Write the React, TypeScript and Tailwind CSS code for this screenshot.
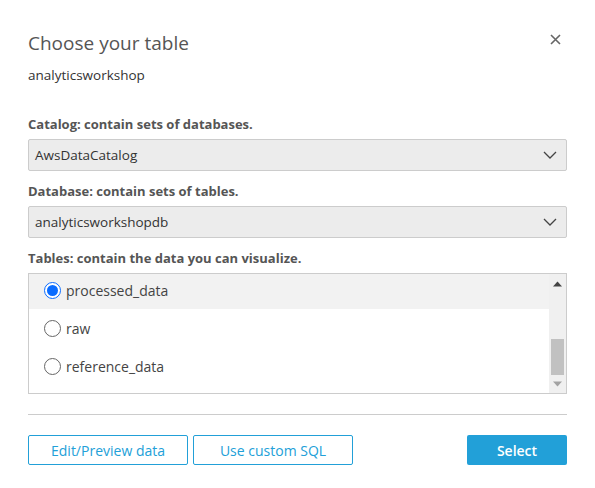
import React from "react";

const Chevron = () => (
  <svg width="14" height="8" viewBox="0 0 14 8" fill="none" stroke="#444" strokeWidth="1.3">
    <path d="M1 1l6 6 6-6" />
  </svg>
);

const Select = ({ value }: { value: string }) => (
  <div className="flex items-center justify-between h-[32px] bg-[#ececec] border border-[#cccccc] rounded-[2px] pl-[6px] pr-[9px] text-[13.5px] text-[#333]">
    <span>{value}</span>
    <Chevron />
  </div>
);

const Radio = ({ checked }: { checked?: boolean }) =>
  checked ? (
    <span className="w-[17px] h-[17px] rounded-full border-[1.5px] border-[#0a6cff] flex items-center justify-center bg-white">
      <span className="w-[11px] h-[11px] rounded-full bg-[#0a6cff]" />
    </span>
  ) : (
    <span className="w-[17px] h-[17px] rounded-full border border-[#666] bg-white" />
  );

export default function App() {
  const rows = [
    { name: "processed_data", checked: true },
    { name: "raw" },
    { name: "reference_data" },
  ];
  return (
    <div className="w-[595px] h-[488px] bg-white px-[28px] pt-[30px] font-['Open_Sans',sans-serif] relative">
      <div className="flex items-start justify-between">
        <h1 className="text-[19px] leading-[26px] text-[#555] font-normal">Choose your table</h1>
        <button className="mt-[4px] mr-[6px] text-[#666]">
          <svg width="11" height="11" viewBox="0 0 11 11" stroke="#666" strokeWidth="1.6">
            <path d="M1 1l9 9M10 1l-9 9" />
          </svg>
        </button>
      </div>
      <div className="mt-[10px] text-[13.5px] leading-[18px] text-[#333]">analyticsworkshop</div>

      <div className="mt-[31px] text-[13px] leading-[18px] font-bold text-[#555]">Catalog: contain sets of databases.</div>
      <div className="mt-[6px]"><Select value="AwsDataCatalog" /></div>

      <div className="mt-[11px] text-[13px] leading-[18px] font-bold text-[#555]">Database: contain sets of tables.</div>
      <div className="mt-[6px]"><Select value="analyticsworkshopdb" /></div>

      <div className="mt-[11px] text-[13px] leading-[18px] font-bold text-[#555]">Tables: contain the data you can visualize.</div>
      <div className="mt-[6px] h-[121px] border border-[#cccccc] flex">
        <div className="flex-1 flex flex-col">
          {rows.map((r) => (
            <div
              key={r.name}
              className={`flex items-center pl-[15px] gap-[5px] text-[14px] text-[#444] ${r.checked ? "bg-[#f2f2f2] h-[35px] pb-[3px]" : "h-[38px]"}`}
            >
              <Radio checked={r.checked} />
              <span>{r.name}</span>
            </div>
          ))}
        </div>
        <div className="w-[17px] bg-[#f0f0f0] flex flex-col items-center">
          <svg width="9" height="6" viewBox="0 0 9 6" className="mt-[7px]"><path d="M0 5.5L4.5 0.5 9 5.5z" fill="#444" /></svg>
          <div className="flex-1" />
          <div className="w-[13px] h-[36px] bg-[#c1c1c1] mb-[6px]" />
          <svg width="9" height="6" viewBox="0 0 9 6" className="mb-[6px]"><path d="M0 0.5L4.5 5.5 9 0.5z" fill="#a3a3a3" /></svg>
        </div>
      </div>

      <div className="mt-[20px] border-t border-[#cccccc]" />

      <div className="mt-[20px] flex items-center">
        <button className="w-[160px] h-[30px] border border-[#22a0d8] rounded-[2px] text-[14px] text-[#22a0d8]">Edit/Preview data</button>
        <button className="ml-[5px] w-[160px] h-[30px] border border-[#22a0d8] rounded-[2px] text-[14px] text-[#22a0d8]">Use custom SQL</button>
        <div className="flex-1" />
        <button className="w-[100px] h-[30px] bg-[#22a0d8] rounded-[2px] text-[14px] text-white font-semibold">Select</button>
      </div>
    </div>
  );
}
